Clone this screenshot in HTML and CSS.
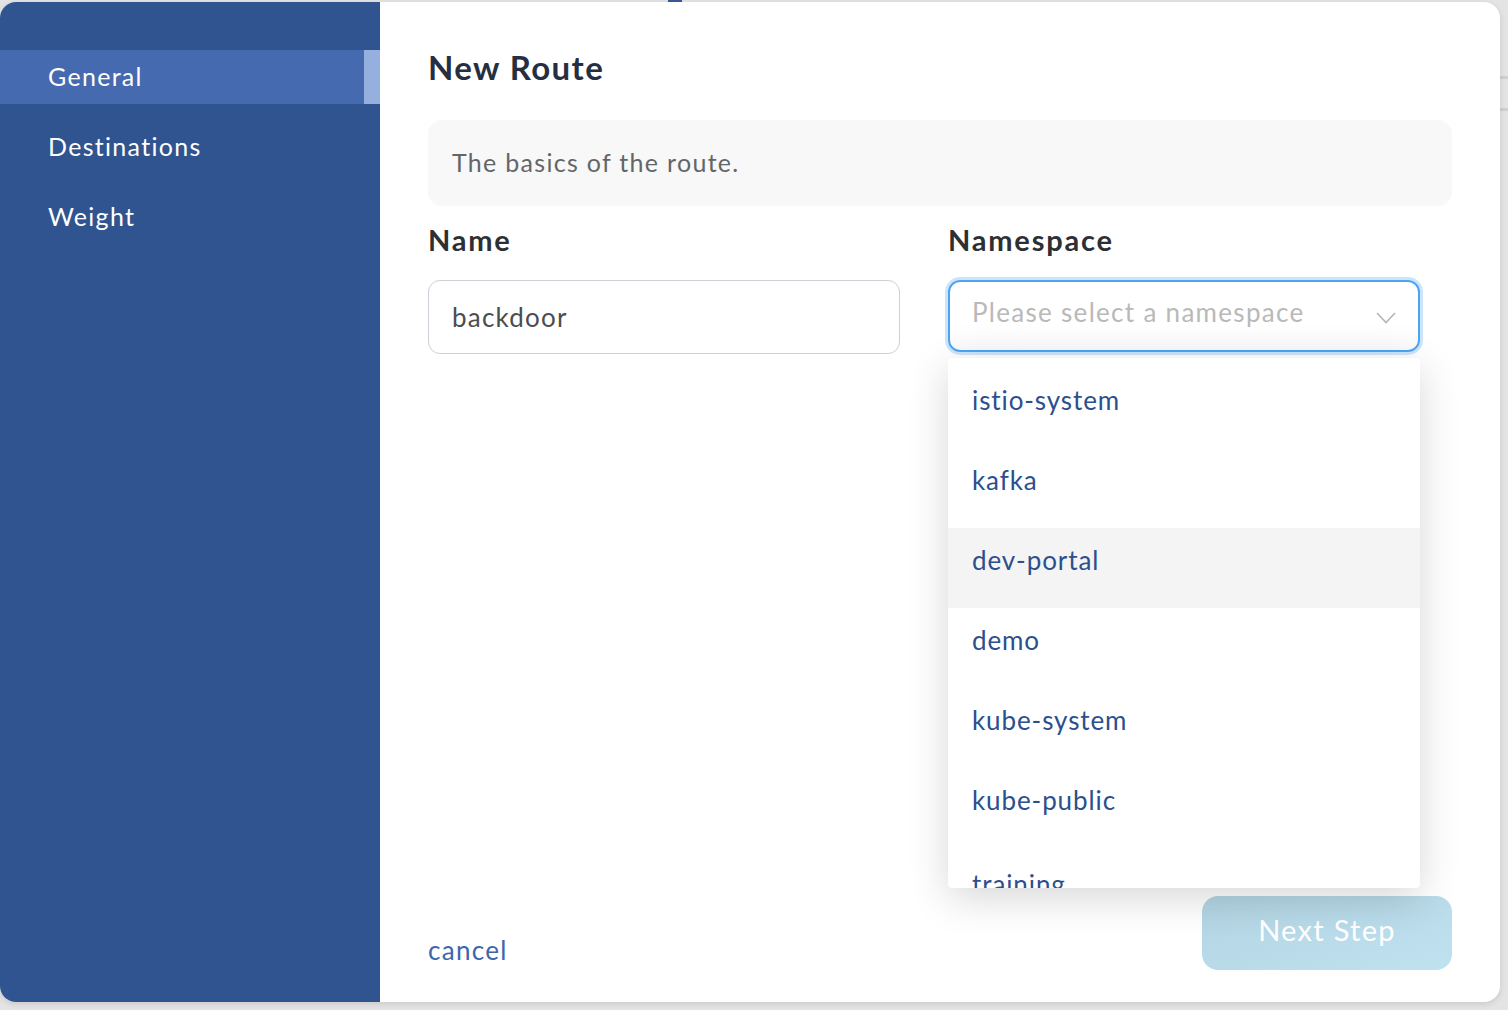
FILE: index.html
```html
<!DOCTYPE html>
<html>
<head>
<meta charset="utf-8">
<link rel="stylesheet" href="styles.css">
</head>
<body>
<div class="page">
  <div class="topmark"></div>
  <div class="bg-lines"><span></span><span></span></div>
  <div class="modal">
    <nav class="sidebar">
      <div class="nav-item active">General</div>
      <div class="nav-item">Destinations</div>
      <div class="nav-item">Weight</div>
    </nav>
    <main class="content">
      <h1 class="title">New Route</h1>
      <div class="desc">The basics of the route.</div>
      <div class="fields">
        <div class="field">
          <div class="label">Name</div>
          <div class="input">backdoor</div>
        </div>
        <div class="field ns">
          <div class="label">Namespace</div>
          <div class="select">
            <span class="placeholder">Please select a namespace</span>
            <svg class="chev" width="20" height="12" viewBox="0 0 20 12"><path d="M1 1 L10 10.5 L19 1" fill="none" stroke="#b5b5b5" stroke-width="1.6"/></svg>
          </div>
          <div class="dropdown">
            <div class="opt">istio-system</div>
            <div class="opt">kafka</div>
            <div class="opt hover">dev-portal</div>
            <div class="opt">demo</div>
            <div class="opt">kube-system</div>
            <div class="opt">kube-public</div>
            <div class="opt">training</div>
          </div>
        </div>
      </div>
      <div class="footer">
        <a class="cancel">cancel</a>
        <button class="next">Next Step</button>
      </div>
    </main>
  </div>
</div>
</body>
</html>
```
FILE: styles.css
```css
* { box-sizing: border-box; }
html, body { margin: 0; padding: 0; }
body {
  background: #e4e4e4;
  font-family: "Lato", "Open Sans", sans-serif;
  width: 1508px;
  height: 1010px;
  overflow: hidden;
}
.page {
  position: relative;
  width: 1508px;
  height: 1010px;
  padding-top: 2px;
}
.topmark {
  position: absolute;
  left: 668px;
  top: 0;
  width: 14px;
  height: 3px;
  background: #3a5a98;
}
.bg-lines span {
  position: absolute;
  left: 1500px;
  width: 8px;
  height: 3px;
  background: #cfcfcf;
}
.bg-lines span:first-child { top: 76px; }
.bg-lines span:last-child { top: 108px; }
.modal {
  position: relative;
  width: 1500px;
  height: 1000px;
  display: flex;
  border-radius: 16px;
  overflow: hidden;
  background: #fff;
  box-shadow: 0 2px 6px rgba(0,0,0,0.12);
}
.sidebar {
  width: 380px;
  flex: none;
  background: #30548f;
  padding-top: 48px;
  display: flex;
  flex-direction: column;
  gap: 16px;
}
.nav-item {
  height: 54px;
  display: flex;
  align-items: center;
  padding-left: 48px;
  padding-bottom: 2px;
  color: #fff;
  font-size: 25px;
  letter-spacing: 1.3px;
}
.nav-item.active {
  background: #466aaf;
  border-right: 16px solid #95b0de;
}
.content {
  flex: 1;
  padding: 43px 48px 32px 48px;
  display: flex;
  flex-direction: column;
}
.title {
  margin: 0;
  font-size: 33px;
  font-weight: 700;
  color: #262f42;
  line-height: 44px;
  letter-spacing: 1.4px;
}
.desc {
  margin-top: 31px;
  height: 86px;
  background: #f8f8f8;
  border-radius: 14px;
  display: flex;
  align-items: center;
  padding-left: 24px;
  padding-bottom: 2px;
  font-size: 25px;
  color: #636668;
  letter-spacing: 1.3px;
}
.fields {
  display: flex;
  gap: 48px;
  margin-top: 14px;
}
.field {
  width: 472px;
  position: relative;
}
.label {
  font-size: 29px;
  font-weight: 700;
  color: #2d3033;
  line-height: 40px;
  letter-spacing: 1.8px;
}
.input {
  margin-top: 20px;
  height: 74px;
  border: 1.5px solid #cdd0d6;
  border-radius: 12px;
  display: flex;
  align-items: center;
  padding-left: 23px;
  font-size: 26px;
  color: #4b4d50;
  letter-spacing: 1.2px;
}
.select {
  margin-top: 20px;
  height: 72px;
  border: 2px solid #4ba4f4;
  border-radius: 12px;
  box-shadow: 0 0 0 3px #cde5fb;
  display: flex;
  align-items: center;
  justify-content: space-between;
  padding: 0 22px 0 22px;
  font-size: 26px;
  background: linear-gradient(#fff 60%, #fafafa);
}
.placeholder {
  color: #b9b9b9;
  margin-top: -8px;
  letter-spacing: 1.3px;
}
.chev { margin-top: 4px; }
.dropdown {
  position: absolute;
  left: 0;
  top: 138px;
  width: 472px;
  height: 530px;
  background: #fff;
  border-radius: 4px;
  box-shadow: 0 10px 40px rgba(0,0,0,0.16);
  overflow: hidden;
  z-index: 5;
  padding-top: 10px;
}
.opt {
  height: 80px;
  display: flex;
  align-items: center;
  padding-left: 24px;
  padding-bottom: 16px;
  font-size: 26px;
  color: #2c4f8d;
  letter-spacing: 0.9px;
}
.opt.hover { background: #f4f4f4; }
.opt:last-child { padding-bottom: 8px; }
.footer {
  margin-top: auto;
  display: flex;
  justify-content: space-between;
  align-items: flex-end;
}
.cancel {
  font-size: 26px;
  color: #3d66ac;
  line-height: 40px;
  letter-spacing: 1.3px;
}
.next {
  width: 250px;
  height: 74px;
  border: none;
  border-radius: 16px;
  background: linear-gradient(160deg, #b3d4e3, #bfe2f0);
  color: #fff;
  font-family: inherit;
  font-size: 29px;
  letter-spacing: 1.3px;
  padding-bottom: 8px;
}
```
